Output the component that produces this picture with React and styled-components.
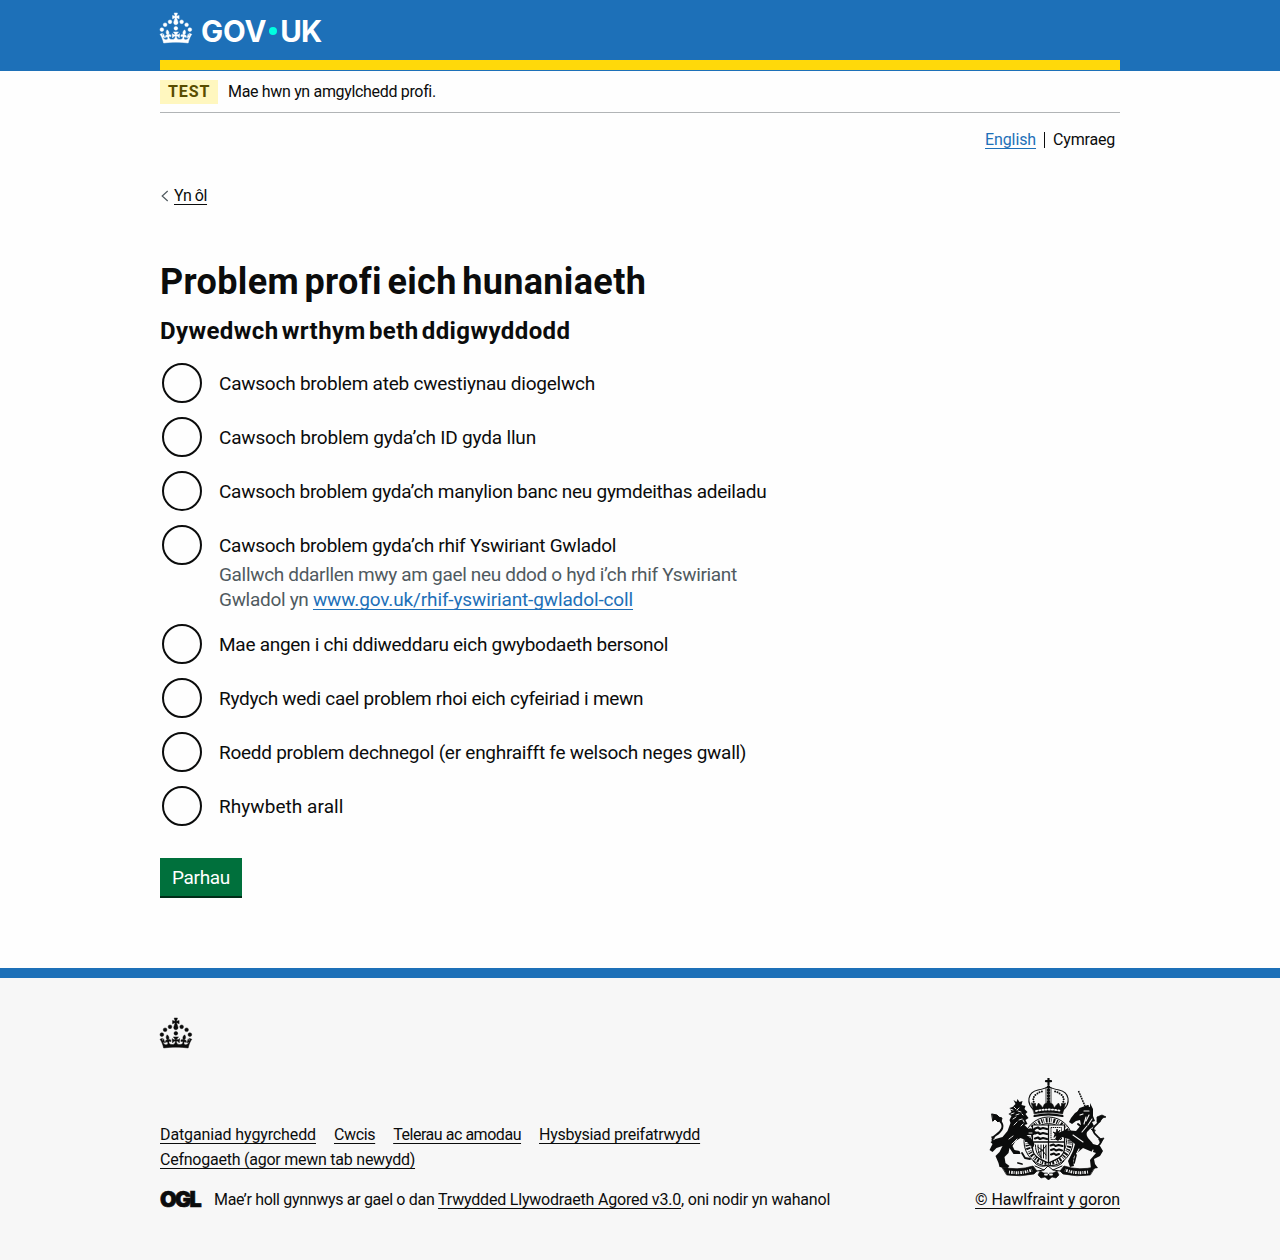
import React from "react";
import styled, { createGlobalStyle } from "styled-components";

const blue = "#1d70b8";
const ink = "#0b0c0c";
const sans = `Roboto, "Noto Sans", sans-serif`;

const GlobalStyle = createGlobalStyle`
  * { box-sizing: border-box; }
  body {
    margin: 0;
    background: #fefefe;
    color: ${ink};
    font: 400 16px/20px ${sans};
    font-variant-ligatures: none;
  }
`;

const Container = styled.div`
  width: 960px;
  margin: 0 auto;
`;

const Header = styled.header`
  background: ${blue};
  border-bottom: 1px solid ${blue};
`;

const HeaderInner = styled(Container)`
  display: flex;
  align-items: flex-start;
  height: 70px;
  padding-top: 13px;
  border-bottom: 10px solid #ffd90a;
  color: #fff;
`;

const Wordmark = styled.span`
  display: flex;
  align-items: center;
  height: 30px;
  margin: 3px 0 0 9px;
  font: 700 29.5px/30px Inter, sans-serif;
`;

const WordmarkPart = styled.span`
  letter-spacing: ${(p) => p.$track}px;
`;

const Dot = styled.span`
  width: 8px;
  height: 8px;
  margin: 0 3px 0 3px;
  border-radius: 50%;
  background: #00ffe0;
`;

const PhaseBanner = styled.div`
  display: flex;
  align-items: center;
  height: 42px;
  border-bottom: 1px solid #b1b4b6;
`;

const Tag = styled.strong`
  width: 58px;
  height: 24px;
  margin-right: 10px;
  padding-left: 8px;
  background: #fff7bf;
  color: #594d00;
  font-weight: 700;
  line-height: 24px;
  letter-spacing: 0.9px;
`;

const Text = styled.span`
  letter-spacing: ${(p) => p.$track}px;
  white-space: pre;
`;

const Link = styled.a`
  color: ${(p) => (p.$blue ? blue : ink)};
  letter-spacing: ${(p) => p.$track}px;
  white-space: nowrap;
  text-decoration: underline;
  text-decoration-thickness: 1px;
  text-decoration-skip-ink: none;
  text-underline-offset: 3px;
`;

const LanguageNav = styled.nav`
  display: flex;
  justify-content: flex-end;
  align-items: center;
  padding: 17px 5px 0 0;
`;

const CurrentLanguage = styled.span`
  display: flex;
  align-items: center;
  height: 16px;
  margin-left: 8px;
  padding-left: 8px;
  border-left: 1px solid ${ink};
  letter-spacing: -0.19px;
`;

const BackLink = styled.div`
  display: flex;
  align-items: center;
  gap: 5px;
  margin-top: 36px;
  padding-left: 1px;
`;

const Title = styled.h1`
  margin: 56px 0 0;
  font-size: 36px;
  line-height: 40px;
  font-weight: 700;
  letter-spacing: 0.35px;
  word-spacing: -3.8px;
`;

const Question = styled.h2`
  margin: 14px 0 0;
  font-size: 24px;
  line-height: 30px;
  font-weight: 700;
  letter-spacing: 0.4px;
  word-spacing: -3.1px;
`;

const RadioList = styled.div`
  display: flex;
  flex-direction: column;
  gap: 10px;
  margin-top: 15px;
`;

const RadioItem = styled.div`
  display: grid;
  grid-template-columns: 44px 1fr;
  column-gap: 15px;
  font-size: 19px;
  line-height: 25px;
`;

const Circle = styled.span`
  width: 40px;
  height: 40px;
  margin: 2px;
  border: 2px solid ${ink};
  border-radius: 50%;
`;

const RadioLabel = styled.label`
  align-self: center;
  padding-top: 1px;
  letter-spacing: ${(p) => p.$track}px;
`;

const Hint = styled.div`
  display: flex;
  flex-direction: column;
  grid-column: 2;
  margin-top: -5px;
  color: #505a5f;
`;

const Button = styled.button`
  display: block;
  width: 82px;
  height: 38px;
  margin: 30px 0 72px;
  padding: 0;
  border: 0;
  background: #00703c;
  box-shadow: 0 2px 0 #002d18;
  color: #fff;
  font: 400 19px/19px ${sans};
  letter-spacing: -0.32px;
`;

const Footer = styled.footer`
  height: 292px;
  padding-top: 40px;
  border-top: 10px solid ${blue};
  background: #f7f7f7;
`;

const FooterColumns = styled.div`
  display: flex;
  justify-content: space-between;
  align-items: flex-end;
  margin-top: 25px;
`;

const FooterLinks = styled.div`
  display: flex;
  flex-wrap: wrap;
  column-gap: 18px;
  width: 600px;
  line-height: 25px;
  margin-bottom: 18px;
`;

const Licence = styled.div`
  display: flex;
  align-items: center;
  line-height: 20px;
`;

const OglMark = styled.span`
  width: 41px;
  margin: -3px 13px 0 0;
  font: 900 21.5px/20px Inter, sans-serif;
  letter-spacing: -1.7px;
  -webkit-text-stroke: 0.7px ${ink};
`;

const Copyright = styled.div`
  display: flex;
  flex-direction: column;
  align-items: flex-end;
  gap: 10px;
`;

const ArmsSlot = styled.div`
  display: flex;
  padding-right: 9px;
`;

const Crown = () => (
  <svg width="32" height="30" viewBox="0 0 64 60" fill="currentColor" stroke="currentColor" strokeWidth="0.9" overflow="visible" aria-hidden="true">
    <circle cx="20" cy="17.6" r="3.7" />
    <circle cx="10.2" cy="23.5" r="3.7" />
    <circle cx="3.7" cy="33.2" r="3.7" />
    <circle cx="31.7" cy="30.6" r="3.7" />
    <circle cx="43.3" cy="17.6" r="3.7" />
    <circle cx="53.2" cy="23.5" r="3.7" />
    <circle cx="59.7" cy="33.2" r="3.7" />
    <path d="M33.1,9.8c.2-.1.3-.3.5-.5l4.6,2.4v-6.8l-4.6,1.5c-.1-.2-.3-.3-.5-.5l1.9-5.9h-6.7l1.9,5.9c-.2.1-.3.3-.5.5l-4.6-1.5v6.8l4.6-2.4c.1.2.3.3.5.5l-2.6,8c-.9,2.8,1.2,5.7,4.1,5.7h0c3,0,5.1-2.9,4.1-5.7l-2.6-8ZM37,37.9s-3.4,3.8-4.1,6.1c2.2,0,4.2-.5,6.4-2.8l-.7,8.5c-2-2.8-4.4-4.1-5.7-3.8.1,3.1.5,6.7,5.8,7.2,3.7.3,6.7-1.5,7-3.8.4-2.6-2-4.3-3.7-1.6-1.4-4.5,2.4-6.1,4.9-3.2-1.9-4.5-1.8-7.7,2.4-10.9,3,4,2.6,7.3-1.2,11.1,2.4-1.3,6.2,0,4,4.6-1.2-2.8-3.7-2.2-4.2.2-.3,1.7.7,3.7,3,4.2,1.9.3,4.7-.9,7-5.9-1.3,0-2.4.7-3.9,1.7l2.4-8c.6,2.3,1.4,3.7,2.2,4.5.6-1.6.5-2.8,0-5.3l5,1.8c-2.6,3.6-5.2,8.7-7.3,17.5-7.4-1.1-15.7-1.7-24.5-1.7h0c-8.8,0-17.1.6-24.5,1.7-2.1-8.9-4.7-13.9-7.3-17.5l5-1.8c-.5,2.5-.6,3.7,0,5.3.8-.8,1.6-2.3,2.2-4.5l2.4,8c-1.5-1-2.6-1.7-3.9-1.7,2.3,5,5.2,6.2,7,5.9,2.3-.4,3.3-2.4,3-4.2-.5-2.4-3-3.1-4.2-.2-2.2-4.6,1.6-6,4-4.6-3.7-3.7-4.2-7.1-1.2-11.1,4.2,3.2,4.3,6.4,2.4,10.9,2.5-2.8,6.3-1.3,4.9,3.2-1.8-2.7-4.1-1-3.7,1.6.3,2.3,3.3,4.1,7,3.8,5.4-.5,5.7-4.2,5.8-7.2-1.3-.2-3.7,1-5.7,3.8l-.7-8.5c2.2,2.3,4.2,2.7,6.4,2.8-.7-2.3-4.1-6.1-4.1-6.1h10.6,0Z" />
  </svg>
);

const RoyalArms = () => (
  <svg width="126" height="102" viewBox="0 5 126 102" fill="none" stroke={ink} strokeLinecap="round" strokeLinejoin="round" aria-hidden="true">
    {/* crown */}
    <path d="M63.500 5.600v6M61 8.200h5" strokeWidth="2.200" />
    <path d="M50 38C40 30 43 19 53 17c5-1 9-2 10.500-4 1.500 2 5.500 3 10.500 4 10 2 13 13 3 21" strokeWidth="1.100" />
    <path d="M50 31C46 26 49 20 59 18M77 31c4-5 1-11-9-13" strokeWidth="2" strokeDasharray="0 2.500" />
    <path d="M63.500 14v16" strokeWidth="3.400" strokeDasharray="0 2.900" />
    <path d="M61 15v15M66 15v15" strokeWidth=".8" />
    <path d="M46.500 30l3 1 2 3 2-4 3 3 1 2 2-4 4-2 4 2 2 4 1-2 3-3 2 4 2-3 3-1-3 11c-8-2-20-2-28 0z" fill={ink} strokeWidth=".6" />
    <path d="M51 38q12.500-3 25 0" stroke="#f7f7f7" strokeWidth="1.800" strokeDasharray="1.200 2" />
    <path d="M49.500 43q14-3.400 28 0" strokeWidth="2.200" />
    {/* garter and shield */}
    <circle cx="63.500" cy="68.500" r="24.500" strokeWidth="1" fill="#f7f7f7" />
    <circle cx="63.500" cy="68.500" r="21.300" strokeWidth="4.400" strokeDasharray="1.300 .9 .6 1.700 1.900 1.300" strokeLinecap="butt" />
    <circle cx="63.500" cy="68.500" r="18" strokeWidth=".9" />
    <path d="M47.500 52h32v23c0 8-7 11-16 15C54.500 86 47.500 83 47.500 75z" fill="#f7f7f7" strokeWidth="1.200" />
    <path d="M63.500 52v37M48 69h31" strokeWidth="1.300" />
    <path d="M50 55.500l3-1 2 1.500 3-1 4 1M50 60.500l3-1 2 1.500 3-1 4 1M50 65.500l3-1 2 1.500 3-1 4 1" strokeWidth="2.200" />
    <rect x="66" y="54.500" width="10.500" height="12" strokeWidth="1" strokeDasharray="1.300 .6" strokeLinecap="butt" />
    <path d="M69 64l1-3-2-2 3 1 1-4 1 3 2-2-2 4 2 3-4-1z" fill={ink} strokeWidth=".8" />
    <path d="M50.500 72c0 8 3 11 6 13M53 72c0 6 1 9 3 12M56 72v13M58.500 72v13M61 72v14M53 80q5-2 8-7M53 74q5 3 8 8" strokeWidth="1" />
    <path d="M65.500 72.500l3-1 2 1.500 3-1 4 1M66 77l3-1 2 1.500 3-1 3 1M66 81.500l3-1 2 1.500 3-1" strokeWidth="2.100" />
    {/* lion */}
    <path d="M29 31l-2-4 3 2 1-3 2 3 3-1-1 4 4 1-1 3 3 3-2 2 3 4-3 2 2 4-3 1 4 4 8-1-2 3 3 1-4 3-7 0 5 4 3 5-1 3-4-2-4-5-5-2-5 3-3 5 2 4 5 1 1 3-7 0-4-6-1 5-4 4 1 6 4 3-2 2-8-1-1-4-3-7 4-4 3-6-6 2-4 4-3-2 3-6-2-2 5-3 7-2 5-6 3-8-1-3 2-4-3-2 3-2-2-4 3-1z" transform="translate(1.500 0)" fill={ink} stroke="none" />
    <path d="M25 36l3 1M29 34l2 2M34 35l-2 2M26 41l3-1M31 42l3-1M28 46l3-2M34 47l3-1M29 52l3-3M36 53l2-2M37 41l1 1M38 47l1 2M33 38l3 1M24 66l4-3M27 71l5-5M44 60l3 0" stroke="#f7f7f7" strokeWidth=".9" />
    <path d="M16 69C7 72 5 66 11 62c6-4 9-9 4-14-2-2-4-1-6-3" strokeWidth="2" />
    <path d="M7 41l5 1 4 4-3 3-3-3-2 2zM13 44l4 1-1 4z" fill={ink} strokeWidth="1" />
    <path d="M13 68l-4 3M9 65l-2-1" strokeWidth="1.600" />
    <path d="M37 80l3 5 5 1M33 90l4 1" strokeWidth="1.800" />
    {/* unicorn */}
    <path d="M93.500 18l6.500 15" strokeWidth="1.500" strokeDasharray="1.800 .7" strokeLinecap="butt" />
    <path d="M101 33l4 1 0-4 3 6 0 7 2 5-3 1 2 4-4 3-3 3c-2 5 4 8 6 12l7 2 3 5-3 5-6 3 1 5 3 4-7 1-1-9 6-7-6-2-7-3-6 5-4 8 1 5-4 1-2-6 5-10 2-7-6-5-7-2-4 4-3-2 3-6 7-3 11 1 5-6-1-5-4 1-4 3-3-2 2-4 4-5z" fill={ink} stroke="none" />
    <path d="M91 43l4-7 8-3M90 46l6-1M93 51l5 4" strokeWidth="2" />
    <path d="M99 38l5 0M95 42l3-1M104 42l-3 6M107 46l-4 6M102 53l-5 6M99 51l2-7M88 62l10 7M94 76l-5 9M108 77l-2 6" stroke="#f7f7f7" strokeWidth="1.100" />
    <path d="M109 74c8-1 8-7 4-10-5-4-7-8-2-12 3-2 3-5 6-7" strokeWidth="1.700" />
    <path d="M112 49l0-5 5-2 4 2-4 1-2 4zM114 66l5-1-3 5zM109 59l-3-3 4 1z" fill={ink} strokeWidth=".8" />
    <path d="M91 82l-2 8M94 71l-4 10" strokeWidth="1.700" />
    {/* motto ribbons */}
    <path d="M17 94q16 4 31-1l4 5-3 3q-14 3-27 1z" fill={ink} strokeWidth=".7" />
    <path d="M110 94q-16 4-31-1l-4 5 3 3q14 3 27 1z" fill={ink} strokeWidth=".7" />
    <path d="M24 99q12 2 23-2M103 99q-12 2-23-2" stroke="#f7f7f7" strokeWidth="3" strokeDasharray=".9 1.200 1.600 .9" strokeLinecap="butt" />
    <path d="M48 88q6 8 15 4 10 4 16-4M50 93l9 4 4-4 5 4 9-4M59 97l-7 1M68 97l7 1" strokeWidth="1" />
    <path d="M55 98l-2 4 3 3 4-1 3.500 3 3.500-3 4 1 3-3-2-4-4 2h-9z" fill={ink} strokeWidth=".6" />
    <path d="M60 101.500h2M65 101.500h2M63.500 98v2" stroke="#f7f7f7" strokeWidth="1.800" />
  </svg>
);

const Chevron = () => (
  <svg width="8" height="12" viewBox="0 0 8 12" fill="none" stroke="#505a5f" strokeWidth="1.200" aria-hidden="true">
    <path d="M6.700 1L1.200 6l5.500 5" />
  </svg>
);

const options = [
  { label: "Cawsoch broblem ateb cwestiynau diogelwch", track: -0.23 },
  { label: "Cawsoch broblem gyda’ch ID gyda llun", track: -0.18 },
  { label: "Cawsoch broblem gyda’ch manylion banc neu gymdeithas adeiladu", track: -0.28 },
  { label: "Cawsoch broblem gyda’ch rhif Yswiriant Gwladol", track: -0.26, hint: true },
  { label: "Mae angen i chi ddiweddaru eich gwybodaeth bersonol", track: -0.27 },
  { label: "Rydych wedi cael problem rhoi eich cyfeiriad i mewn", track: -0.28 },
  { label: "Roedd problem dechnegol (er enghraifft fe welsoch neges gwall)", track: -0.26 },
  { label: "Rhywbeth arall", track: 0.06 },
];

const footerLinks = [
  { label: "Datganiad hygyrchedd", track: -0.12 },
  { label: "Cwcis", track: -0.36 },
  { label: "Telerau ac amodau", track: -0.46 },
  { label: "Hysbysiad preifatrwydd", track: -0.26 },
  { label: "Cefnogaeth (agor mewn tab newydd)", track: -0.24 },
];

export default function App() {
  return (
    <>
      <GlobalStyle />
      <Header>
        <HeaderInner>
          <Crown />
          <Wordmark>
            <WordmarkPart $track={-0.15}>GOV</WordmarkPart>
            <Dot />
            <WordmarkPart $track={-0.9}>UK</WordmarkPart>
          </Wordmark>
        </HeaderInner>
      </Header>

      <Container>
        <PhaseBanner>
          <Tag>TEST</Tag>
          <Text $track={-0.33}>Mae hwn yn amgylchedd profi.</Text>
        </PhaseBanner>
        <LanguageNav>
          <Link $blue $track={-0.11}>English</Link>
          <CurrentLanguage>Cymraeg</CurrentLanguage>
        </LanguageNav>
        <BackLink>
          <Chevron />
          <Link $track={-0.42}>Yn ôl</Link>
        </BackLink>

        <main>
          <Title>Problem profi eich hunaniaeth</Title>
          <Question>Dywedwch wrthym beth ddigwyddodd</Question>
          <RadioList>
            {options.map((option) => (
              <RadioItem key={option.label}>
                <Circle />
                <RadioLabel $track={option.track}>{option.label}</RadioLabel>
                {option.hint && (
                  <Hint>
                    <Text $track={-0.33}>Gallwch ddarllen mwy am gael neu ddod o hyd i’ch rhif Yswiriant</Text>
                    <span>
                      <Text $track={-0.3}>{"Gwladol yn "}</Text>
                      <Link $blue $track={-0.13}>www.gov.uk/rhif-yswiriant-gwladol-coll</Link>
                    </span>
                  </Hint>
                )}
              </RadioItem>
            ))}
          </RadioList>
          <Button>Parhau</Button>
        </main>
      </Container>

      <Footer>
        <Container>
          <Crown />
          <FooterColumns>
            <div>
              <FooterLinks>
                {footerLinks.map((link) => (
                  <Link key={link.label} $track={link.track}>{link.label}</Link>
                ))}
              </FooterLinks>
              <Licence>
                <OglMark>OGL</OglMark>
                <Text $track={-0.32}>{"Mae’r holl gynnwys ar gael o dan "}</Text>
                <Link $track={-0.2}>Trwydded Llywodraeth Agored v3.0</Link>
                <Text $track={-0.21}>, oni nodir yn wahanol</Text>
              </Licence>
            </div>
            <Copyright>
              <ArmsSlot>
                <RoyalArms />
              </ArmsSlot>
              <Link $track={-0.09}>© Hawlfraint y goron</Link>
            </Copyright>
          </FooterColumns>
        </Container>
      </Footer>
    </>
  );
}
